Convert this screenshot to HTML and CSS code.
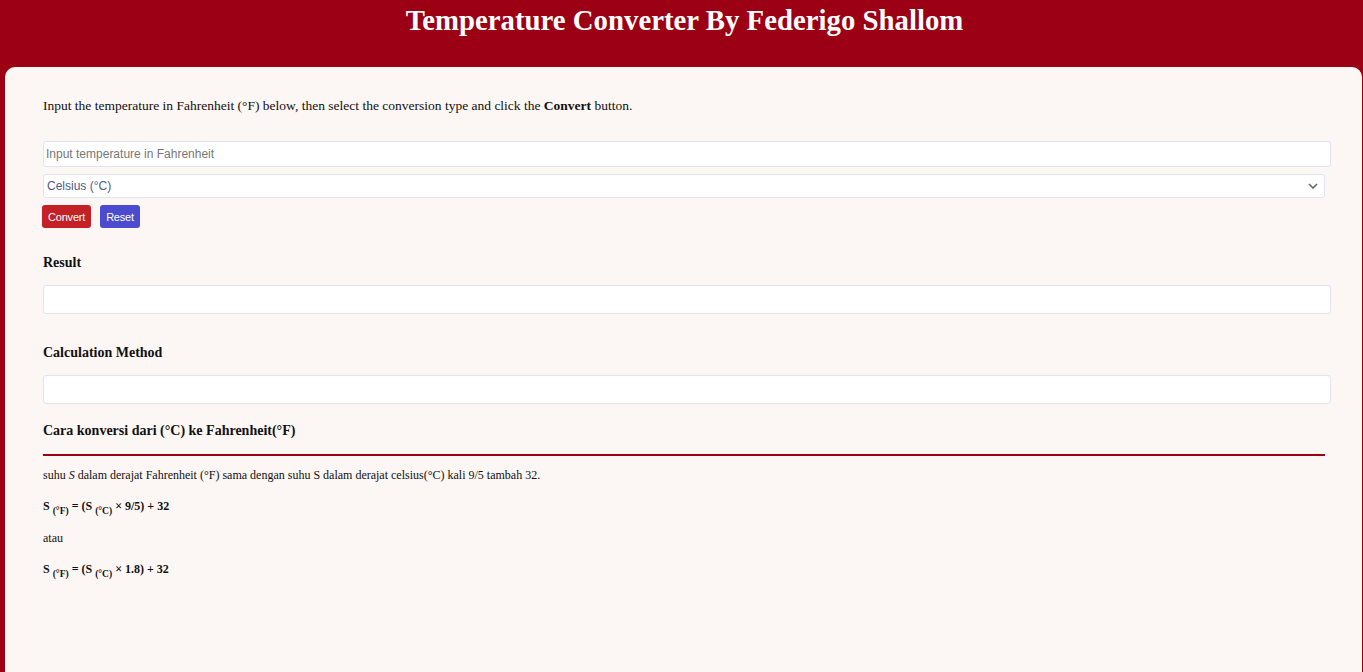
FILE: index.html
```html
<!DOCTYPE html>
<html lang="en">
<head>
<meta charset="utf-8">
<title>Temperature Converter</title>
<link rel="stylesheet" href="styles.css">
</head>
<body>
<header class="top">
  <h1 class="title">Temperature Converter By Federigo Shallom</h1>
</header>
<main class="card">
  <p class="intro">Input the temperature in Fahrenheit (°F) below, then select the conversion type and click the <b>Convert</b> button.</p>
  <input class="field" type="text" placeholder="Input temperature in Fahrenheit">
  <div class="select">
    <span class="select-text">Celsius (°C)</span>
    <svg class="chev" width="10" height="6" viewBox="0 0 10 6"><path d="M1 1l4 4 4-4" fill="none" stroke="#666" stroke-width="1.6"/></svg>
  </div>
  <div class="buttons">
    <button class="btn btn-red">Convert</button>
    <button class="btn btn-blue">Reset</button>
  </div>
  <h3 class="label label-result">Result</h3>
  <div class="box"></div>
  <h3 class="label label-calc">Calculation Method</h3>
  <div class="box"></div>
  <h3 class="label label-cara">Cara konversi dari (°C) ke Fahrenheit(°F)</h3>
  <hr class="rule">
  <p class="txt">suhu <i>S</i> dalam derajat Fahrenheit (°F) sama dengan suhu S dalam derajat celsius(°C) kali 9/5 tambah 32.</p>
  <p class="formula">S <sub>(°F)</sub> = (S <sub>(°C)</sub> × 9/5) + 32</p>
  <p class="txt">atau</p>
  <p class="formula">S <sub>(°F)</sub> = (S <sub>(°C)</sub> × 1.8) + 32</p>
</main>
</body>
</html>
```
FILE: styles.css
```css
html, body {
  margin: 0;
  padding: 0;
  background: #9b0014;
  font-family: "Liberation Serif", "Times New Roman", serif;
  color: #111;
  overflow: hidden;
}
.top {
  height: 67px;
  box-sizing: border-box;
  padding: 3px 0 0 6px;
}
.title {
  margin: 0;
  text-align: center;
  color: #fff;
  font-size: 28.8px;
  font-weight: bold;
  line-height: 34px;
}
.card {
  margin: 0 1px 0 5px;
  background: #fcf6f4;
  border-radius: 10px;
  padding: 31px 37px 120px 38px;
  display: flex;
  flex-direction: column;
  align-items: stretch;
  min-height: 500px;
}
.intro {
  margin: 0 0 28px;
  font-size: 13.5px;
  line-height: 15px;
}
.field {
  box-sizing: border-box;
  width: calc(100% + 6px);
  height: 26px;
  margin: 0;
  padding: 0 2px;
  border: 1px solid #e3e3f5;
  border-radius: 3px;
  background: #fff;
  font-family: "Liberation Sans", Arial, sans-serif;
  font-size: 12px;
  outline: none;
}
.field::placeholder { color: #777; }
.select {
  margin-top: 7px;
  height: 24px;
  box-sizing: border-box;
  border: 1px solid #e3e3f5;
  border-radius: 3px;
  background: #fff;
  display: flex;
  align-items: center;
  justify-content: space-between;
  padding: 0 6px 0 3px;
  font-family: "Liberation Sans", Arial, sans-serif;
  font-size: 12px;
  color: #4f5a8c;
}
.chev { display: block; }
.buttons {
  margin-top: 7px;
  display: flex;
  gap: 9px;
}
.btn {
  height: 23px;
  border: none;
  border-radius: 3px;
  color: #fff;
  font-family: "Liberation Sans", Arial, sans-serif;
  font-size: 11px;
  padding: 0 6px;
  letter-spacing: -0.2px;
}
.btn-red { background: #c42026; width: 49px; margin-left: -1px; }
.btn-blue { background: #4c4bcf; width: 40px; }
.label {
  margin: 0;
  font-size: 14px;
  line-height: 16px;
  font-weight: bold;
}
.label-result { margin-top: 27px; }
.label-calc { margin-top: 31px; }
.label-cara { margin-top: 19px; }
.box {
  margin-top: 14px;
  height: 29px;
  width: calc(100% + 6px);
  box-sizing: border-box;
  background: #fff;
  border: 1px solid #e3e3f5;
  border-radius: 3px;
}
.rule {
  margin: 15px 0 0;
  border: none;
  height: 2px;
  background: #9b0014;
}
.txt {
  margin: 12px 0 0;
  font-size: 12px;
  line-height: 14px;
}
.formula {
  margin: 12px 0 0;
  font-size: 12px;
  line-height: 14px;
  font-weight: bold;
}
.formula + .txt { margin-top: 18px; }
.txt + .formula { margin-top: 17px; }
.formula sub {
  font-size: 9.5px;
  vertical-align: -4px;
  line-height: 0;
}
```
